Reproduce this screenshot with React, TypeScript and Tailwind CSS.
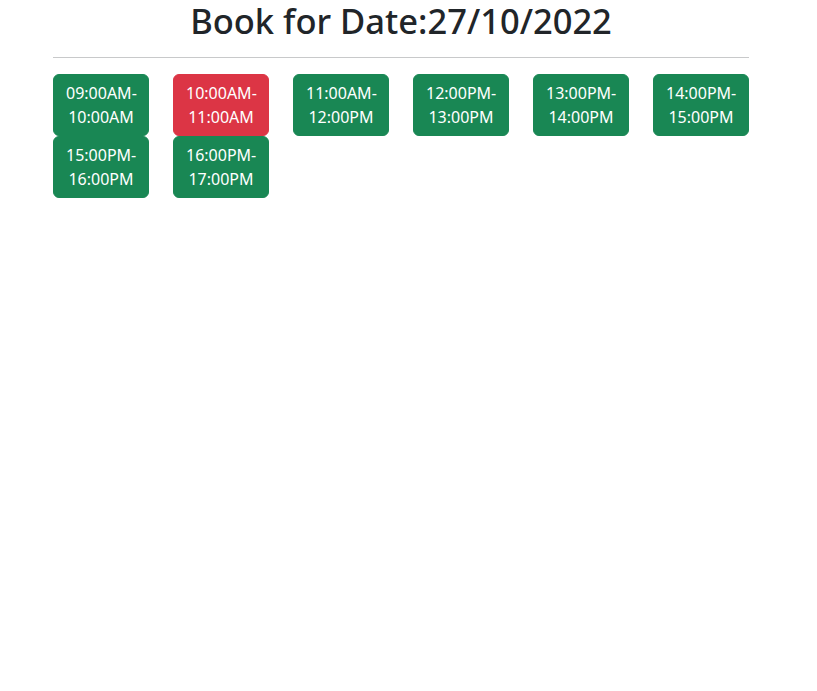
const slots = [
  { label: '09:00AM-10:00AM', booked: false },
  { label: '10:00AM-11:00AM', booked: true },
  { label: '11:00AM-12:00PM', booked: false },
  { label: '12:00PM-13:00PM', booked: false },
  { label: '13:00PM-14:00PM', booked: false },
  { label: '14:00PM-15:00PM', booked: false },
  { label: '15:00PM-16:00PM', booked: false },
  { label: '16:00PM-17:00PM', booked: false },
]

export default function App() {
  return (
    <div className="min-h-screen bg-white text-[#212529]" style={{ fontFamily: '"Noto Sans", "Open Sans", sans-serif' }}>
      <div className="ml-[53px] w-[696px]">
        <h1 className="text-center text-[34.5px] leading-[41px] font-medium">Book for Date:27/10/2022</h1>
        <hr className="my-4 border-t border-[#c8c9ca]" />
        <div className="grid grid-cols-6 gap-x-6">
          {slots.map((s) => (
            <button
              key={s.label}
              className={
                'rounded-md border px-3 py-1.5 text-base leading-6 text-white ' +
                (s.booked ? 'bg-[#dc3545] border-[#dc3545]' : 'bg-[#198754] border-[#198754]')
              }
            >
              {s.label}
            </button>
          ))}
        </div>
      </div>
    </div>
  )
}
